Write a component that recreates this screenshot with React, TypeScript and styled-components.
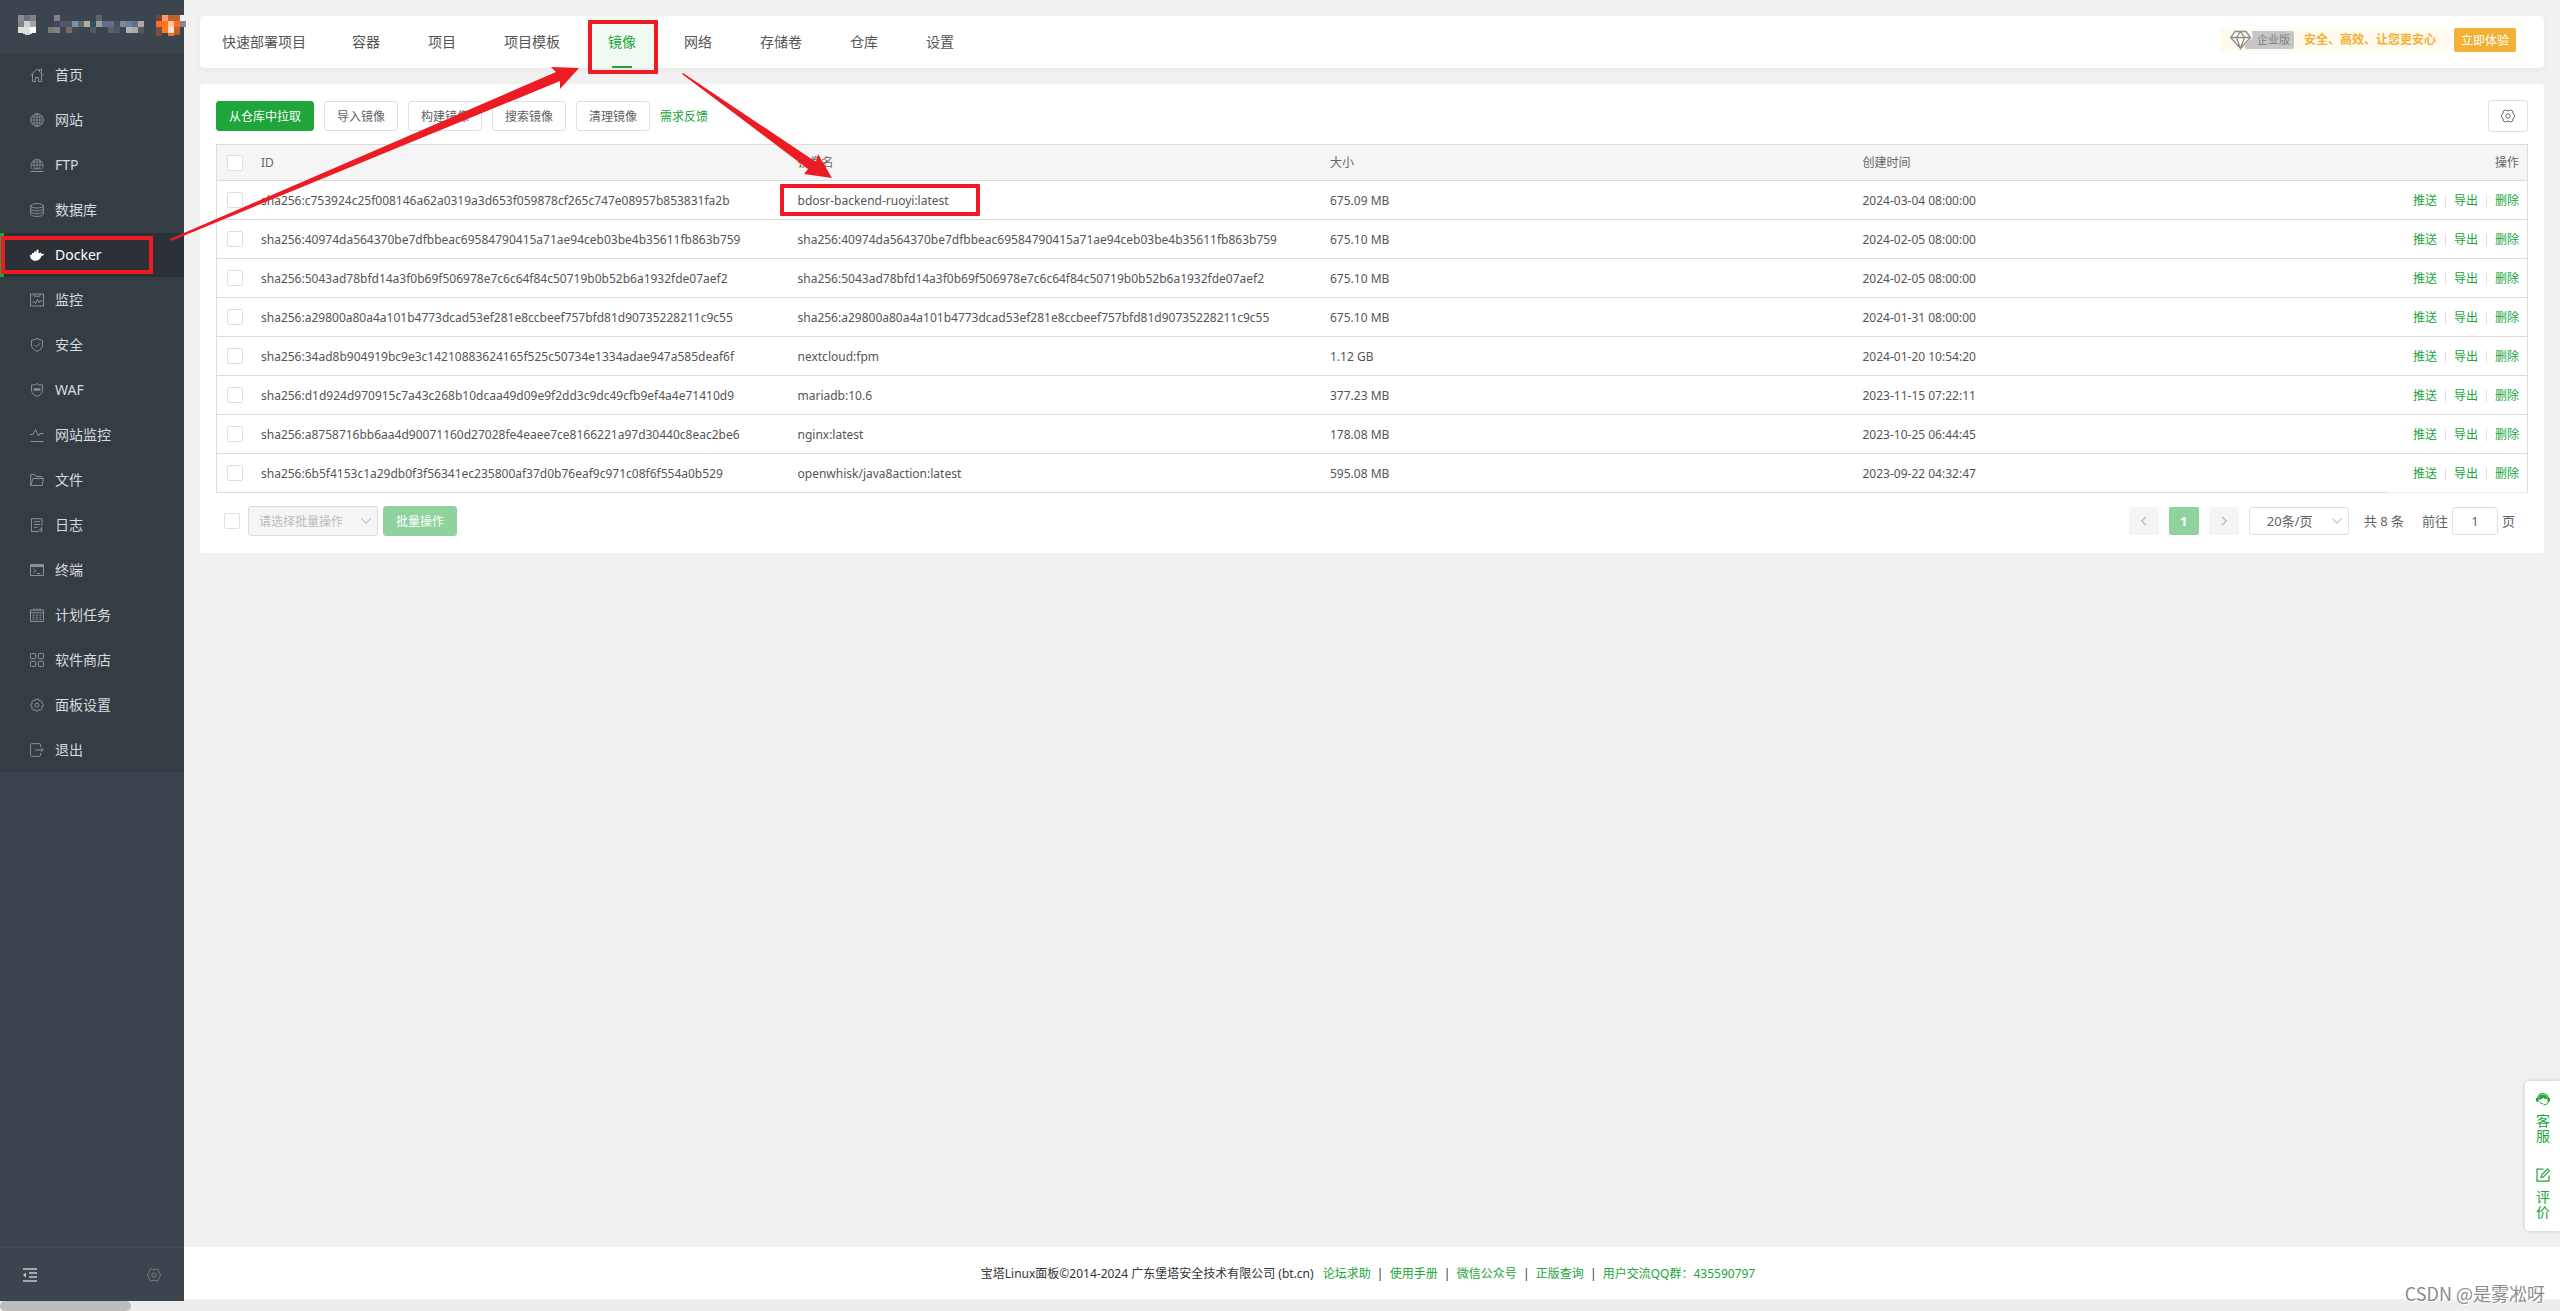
import React from "react";
import styled, { createGlobalStyle, css } from "styled-components";

const green = "#20a53a";
const line = "#dcdcdc";
const control = "#dcdfe6";

const GlobalStyle = createGlobalStyle`
  *, *::before, *::after { box-sizing: border-box; }
  body {
    margin: 0;
    background: #f1f1f1;
    color: #555;
    font: 12px/18px "Noto Sans", "Noto Sans CJK SC", sans-serif;
  }
  a { color: inherit; text-decoration: none; }
  button, input, select { font: inherit; color: inherit; margin: 0; }
  svg { display: block; flex: none; }
`;

/* ---------- shell ---------- */

const Shell = styled.div`
  position: relative;
  min-height: 100vh;
  display: flex;
  flex-direction: column;
  overflow: hidden;
`;

const Columns = styled.div`
  flex: 1;
  display: flex;
`;

const ScrollTrack = styled.div`
  height: 10px;
  background: #ededed;
`;

const ScrollThumb = styled.div`
  width: 131px;
  height: 10px;
  border-radius: 5px;
  background: #bcbcbc;
`;

/* ---------- sidebar ---------- */

const Sidebar = styled.aside`
  width: 184px;
  flex: none;
  display: flex;
  flex-direction: column;
  background: #3c444d;
`;

const Brand = styled.div`
  height: 53px;
  padding: 15px 0 0 18px;
`;

const Menu = styled.nav`
  display: flex;
  flex-direction: column;
  gap: 1px;
  background: #353d44;
`;

const MenuLink = styled.a<{ $active?: boolean }>`
  height: 44px;
  display: flex;
  align-items: center;
  gap: 11px;
  padding-left: 26px;
  border-left: 4px solid transparent;
  color: #d9dadb;
  font-size: 14px;
  line-height: 20px;
  svg { color: #8d9092; }
  ${(p) =>
    p.$active &&
    css`
      background: #2c3138;
      border-left-color: ${green};
      color: #fff;
      svg { color: #fff; }
    `}
`;

const SidebarTools = styled.div`
  height: 54px;
  margin-top: auto;
  padding: 0 23px;
  display: flex;
  justify-content: space-between;
  align-items: center;
  border-top: 1px solid #3f4f57;
`;

const ToolButton = styled.button<{ $dim?: boolean }>`
  padding: 0;
  border: 0;
  background: none;
  color: ${(p) => (p.$dim ? "#7b8084" : "#c6c8ca")};
`;

/* ---------- main ---------- */

const Main = styled.main`
  flex: 1;
  min-width: 0;
  display: flex;
  flex-direction: column;
`;

const Content = styled.div`
  flex: 1;
  display: flex;
  flex-direction: column;
  gap: 16px;
  padding: 16px;
`;

const Panel = styled.section`
  background: #fff;
  border-radius: 4px;
`;

const TopBar = styled(Panel)`
  height: 52px;
  display: flex;
  justify-content: space-between;
  padding-right: 28px;
  box-shadow: 0 2px 6px rgba(0, 0, 0, 0.04);
`;

const Tabs = styled.nav`
  display: flex;
  gap: 4px;
`;

const Tab = styled.a<{ $active?: boolean }>`
  display: flex;
  align-items: center;
  justify-content: center;
  position: relative;
  padding: 0 22px;
  font-size: 14px;
  line-height: 20px;
  &:first-child { padding-right: 20px; }
  ${(p) =>
    p.$active &&
    css`
      background: #f0f9f2;
      color: ${green};
      &::after {
        content: "";
        position: absolute;
        bottom: 0;
        width: 20px;
        height: 2px;
        background: ${green};
      }
    `}
`;

const Promo = styled.div`
  display: flex;
  align-items: center;
  height: 24px;
  margin-top: 12px;
`;

const PromoStrip = styled.div`
  display: flex;
  align-items: center;
  height: 22px;
  padding: 0 10px;
  background: #fff9ee;
  border-radius: 2px;
  color: #f3b133;
  font-weight: 700;
`;

const Edition = styled.span`
  height: 18px;
  margin: 0 10px 0 -7px;
  padding: 0 4px 0 12px;
  border-radius: 2px;
  background: #c6c6c6;
  clip-path: polygon(7px 0, 100% 0, 100% 100%, 0 100%, 0 14px, 8px 6px);
  color: #808080;
  font-size: 11px;
  font-weight: 400;
`;

const PromoTip = styled.span`
  width: 8px;
  height: 12px;
  background: #fff9ee;
  clip-path: polygon(0 0, 7px 50%, 0 100%);
`;

const PromoButton = styled.button`
  height: 24px;
  padding: 2px 7px 0;
  border: 0;
  border-radius: 2px;
  background: #f3b133;
  color: #fff;
  line-height: 18px;
`;

const Card = styled(Panel)`
  padding: 16px;
`;

const Toolbar = styled.div`
  height: 32px;
  display: flex;
  align-items: center;
  gap: 10px;
`;

const Button = styled.button<{ $kind?: "primary" | "muted" }>`
  height: 30px;
  padding: 2px 12px 0;
  border: 1px solid ${control};
  border-radius: 3px;
  background: #fff;
  color: #606266;
  line-height: 18px;
  ${(p) => p.$kind === "primary" && css`background: ${green}; border-color: ${green}; color: #fff;`}
  ${(p) => p.$kind === "muted" && css`background: #90d29d; border-color: #90d29d; color: #fff;`}
`;

const GreenLink = styled.a`
  padding-top: 2px;
  color: ${green};
`;

const SettingsButton = styled.button`
  width: 40px;
  height: 32px;
  margin-left: auto;
  padding: 0;
  display: flex;
  align-items: center;
  justify-content: center;
  border: 1px solid ${control};
  border-radius: 3px;
  background: #fff;
  color: #606266;
`;

const CheckBox = styled.input.attrs({ type: "checkbox" })`
  appearance: none;
  display: block;
  width: 16px;
  height: 16px;
  border: 1px solid ${control};
  border-radius: 2px;
  background: #fff;
  &:checked { background: ${green}; border-color: ${green}; }
`;

const Table = styled.table`
  width: 100%;
  margin-top: 12px;
  table-layout: fixed;
  border-collapse: separate;
  border-spacing: 0;
  border: 1px solid ${line};
  border-bottom: 0;
`;

const Th = styled.th<{ $width?: number; $pad?: number; $right?: boolean }>`
  height: 36px;
  width: ${(p) => (p.$width ? `${p.$width}px` : "auto")};
  padding: 0 8px 0 ${(p) => p.$pad ?? 8}px;
  border-bottom: 1px solid ${line};
  background: #f5f5f5;
  color: #666;
  font-weight: 400;
  text-align: ${(p) => (p.$right ? "right" : "left")};
`;

const Td = styled.td<{ $pad?: number; $check?: boolean }>`
  height: 39px;
  padding: ${(p) => (p.$check ? 0 : 2)}px 8px 0 ${(p) => p.$pad ?? 8}px;
  border-bottom: 1px solid ${line};
  white-space: nowrap;
  tr:last-child > &:last-child { border-bottom-color: #ebeef5; }
`;

const Actions = styled.div`
  display: flex;
  justify-content: flex-end;
  align-items: center;
  color: ${green};
  a + a {
    margin-left: 8px;
    padding-left: 9px;
    background: linear-gradient(${control}, ${control}) 0 3px / 1px 12px no-repeat;
  }
`;

const CardFooter = styled.div`
  display: flex;
  align-items: center;
  justify-content: space-between;
  height: 32px;
  margin-top: 12px;
`;

const Batch = styled.div`
  display: flex;
  align-items: center;
  gap: 5px;
  padding-left: 8px;
`;

const SelectBox = styled.span<{ $muted?: boolean }>`
  position: relative;
  display: inline-flex;
  align-items: center;
  color: ${(p) => (p.$muted ? "#bcbcbc" : "#606266")};
  margin-left: ${(p) => (p.$muted ? "3px" : "0")};
  select {
    appearance: none;
    width: ${(p) => (p.$muted ? 130 : 100)}px;
    height: ${(p) => (p.$muted ? 30 : 28)}px;
    padding: ${(p) => (p.$muted ? "2px 24px 0 10px" : "0 24px 0 17px")};
    border: 1px solid ${(p) => (p.$muted ? line : control)};
    border-radius: 3px;
    background: ${(p) => (p.$muted ? "#f5f5f5" : "#fff")};
    color: inherit;
    opacity: 1;
  }
  svg {
    position: absolute;
    right: 6px;
    color: #c0c4cc;
    pointer-events: none;
  }
`;

const Pager = styled.div`
  display: flex;
  align-items: center;
  gap: 10px;
  padding-right: 13px;
  color: #606266;
  font-size: 13px;
`;

const PageButton = styled.button<{ $current?: boolean }>`
  width: 30px;
  height: 28px;
  padding: 0;
  display: flex;
  align-items: center;
  justify-content: center;
  border: 0;
  border-radius: 2px;
  background: ${(p) => (p.$current ? "#90d29d" : "#f4f4f5")};
  color: ${(p) => (p.$current ? "#fff" : "#c0c4cc")};
  font-weight: 700;
`;

const Total = styled.span`
  padding: 0 8px 0 5px;
`;

const Jump = styled.label`
  display: flex;
  align-items: center;
  gap: 4px;
  input {
    width: 46px;
    height: 28px;
    padding: 0;
    border: 1px solid ${control};
    border-radius: 3px;
    background: #fff;
    text-align: center;
  }
`;

const Footer = styled.footer`
  height: 52px;
  margin-bottom: 2px;
  padding: 2px 8px 0 0;
  display: flex;
  align-items: center;
  justify-content: center;
  background: #fff;
  color: #333;
`;

const FooterLinks = styled.span`
  display: flex;
  margin-left: 9px;
  color: ${green};
  a + a::before {
    content: "|";
    display: inline-block;
    width: 19px;
    text-align: center;
    color: #333;
  }
`;

/* ---------- floating layers ---------- */

const Dock = styled.div`
  position: absolute;
  right: 0;
  bottom: 80px;
  width: 35px;
  height: 150px;
  padding: 11px 0 0 11px;
  border-radius: 4px 0 0 4px;
  background: #fff;
  box-shadow: 0 0 4px rgba(0, 0, 0, 0.18);
`;

const DockLink = styled.a`
  display: flex;
  flex-direction: column;
  gap: 7px;
  width: 14px;
  height: 76px;
  color: ${green};
  font-size: 14px;
  line-height: 15px;
`;

const Watermark = styled.div`
  position: absolute;
  right: 15px;
  bottom: 6px;
  color: #8c8c8c;
  font: 18px/24px "Noto Sans CJK SC", sans-serif;
  text-shadow: 1px 1px 0 #fff;
`;

const Mark = styled.div<{ $x: number; $y: number; $w: number; $h: number }>`
  position: absolute;
  left: ${(p) => p.$x}px;
  top: ${(p) => p.$y}px;
  width: ${(p) => p.$w}px;
  height: ${(p) => p.$h}px;
  border: 4px solid #ed1c24;
  border-radius: 1px;
  pointer-events: none;
`;

const Arrows = styled.svg`
  position: absolute;
  left: 0;
  top: 0;
  pointer-events: none;
`;

/* ---------- icons ---------- */

const Icon = ({ children, size = 14 }: { children: React.ReactNode; size?: number }) => (
  <svg width={size} height={size} viewBox="0 0 14 14" fill="none" stroke="currentColor" strokeWidth="1" aria-hidden="true">
    {children}
  </svg>
);

const hexGear = (
  <>
    <path d="M4.400.9 5.800 1.700h2.400L9.600.9l2.100 1.200v1.600l1.200 2 .7 1.300-.7 1.300-1.200 2v1.600l-2.100 1.200-1.400-.8H5.800l-1.400.8-2.100-1.200v-1.600l-1.200-2L.4 7l.7-1.300 1.200-2V2.100z" />
    <circle cx="7" cy="7" r="2.200" />
  </>
);

const icons: Record<string, React.ReactNode> = {
  home: <path d="M.5 7.300 7 1l6.500 6.300M2.500 6v7.500h3V9.500h3v4h3V6M9.500 3V1.200h2V4.500" />,
  globe: (
    <g strokeWidth=".8">
      <circle cx="7" cy="7" r="6.300" strokeWidth="1" />
      <ellipse cx="7" cy="7" rx="3" ry="6.300" />
      <path d="M7 .5v13M.7 7h12.600M1.500 4h11M1.500 10h11" />
    </g>
  ),
  ftp: (
    <g strokeWidth=".8">
      <path d="M2.300 11.300A6 6 0 1 1 11.700 11.300M7 1v10.300M1 7h12M2 4h10M3 11.300c1.500-1 6.500-1 8 0M4.800 10.600C3.400 8 3.400 4 5 1.400M9.200 10.600c1.400-2.600 1.400-6.600-.2-9.200" />
      <path d="M.5 13.500h13" strokeWidth="1" />
    </g>
  ),
  database: (
    <>
      <ellipse cx="7" cy="2.800" rx="6.300" ry="2.200" />
      <path d="M.7 2.800v8.400c0 1.200 2.800 2.200 6.300 2.200s6.300-1 6.300-2.200V2.800M.7 5.600c0 1.200 2.800 2.200 6.300 2.200s6.300-1 6.300-2.200M.7 8.400c0 1.200 2.800 2.200 6.300 2.200s6.300-1 6.300-2.200" />
    </>
  ),
  docker: (
    <path
      d="M0 6.800h2V5h2V3.600h2.500V1.800h2V5h1.300v1.600c.5-.8.4-1.700 0-2.300.9.200 1.400.9 1.600 1.600.9-.3 1.800-.2 2.600.3-.5 1-1.500 1.500-2.500 1.500C10.500 11 8.500 12.800 5.300 12.800 2 12.800 0 10.500 0 6.800z"
      fill="currentColor"
      stroke="none"
    />
  ),
  monitor: <path d="M.5 1h13v12H.5zM4 1v2.200h6V1M2.500 9.500l1.500-1 1.500 2 2-4 1.500 3 1-1.500h2" />,
  shield: <path d="M7 .6 12.500 2.500v4.700c0 3-2.500 5-5.500 6.200C4 12.200 1.500 10.200 1.500 7.200V2.500zM4.500 6.800l2 2 3.500-3.500" />,
  waf: (
    <>
      <path d="M7 .6 8.800 1.800 12.500 2v5.200c0 3-2.500 5-5.500 6.200C4 12.200 1.500 10.200 1.500 7.200V2l3.700-.2z" />
      <path d="M3.500 6.500h7" strokeWidth="2.500" />
    </>
  ),
  pulse: <path d="M0 6.500h3l2.500-5 3 6.500 1.500-2.500h3.500M.5 13.500h13" />,
  folder: <path d="M.7 12.500V1.500h4l1.300 2h6v2M.7 12.500 3 5.500h10.500l-1.300 7z" />,
  log: (
    <>
      <path d="M9 13.500H1.500V.7h10.500V8M4 3.700h6M4 6.500h6M4 9.300h3.500M11.500 9v3" />
      <circle cx="10.800" cy="12.200" r="1.200" />
    </>
  ),
  terminal: (
    <>
      <path d="M.5 1.500h13v11H.5zM3.500 6l2.200 2-2.200 2M7 10.500h3.500" />
      <path d="M.5 2.800h13" strokeWidth="2.500" />
    </>
  ),
  calendar: (
    <path d="M.5 2h13v11.500H.5zM.5 4.800h13M4 .3V3M10 .3V3M7 .3V3M2.500 7.200h2M6 7.200h2M9.500 7.200h2M2.500 9.300h2M6 9.300h2M9.500 9.300h2M2.500 11.400h2M6 11.400h2M9.500 11.400h2" />
  ),
  grid: (
    <>
      <rect x=".5" y=".5" width="5.200" height="5.200" rx=".8" />
      <rect x="8.300" y=".5" width="5.200" height="5.200" rx=".8" />
      <rect x=".5" y="8.300" width="5.200" height="5.200" rx=".8" />
      <rect x="8.300" y="8.300" width="5.200" height="5.200" rx=".8" />
    </>
  ),
  gear: (
    <>
      <path d="M5.500 1.200h3l.5 1.500 1.600-.5 1.700 2L11.600 5.500l1.600.7v2l-1.600.7.700 1.500-1.700 1.800L9 11.500l-.5 1.400h-3L5 11.500l-1.600.7-1.700-1.800.7-1.500L.8 8.200v-2l1.600-.7L1.700 4.200l1.700-2L5 2.700z" />
      <circle cx="7" cy="7.100" r="2" />
    </>
  ),
  exit: <path d="M10.500 4V1.500l-1-.9H1.500L.6 1.500v11l.9.9h8l1-.9V10M5 7h8M11 4.800 13.300 7 11 9.200" />,
};

const Chevron = ({ dir, heavy }: { dir: "down" | "left" | "right"; heavy?: boolean }) => (
  <Icon size={12}>
    <path
      d={{ down: "M1.500 4 7 9.500 12.500 4", left: "M9.500 2 4.500 7l5 5", right: "M4.500 2l5 5-5 5" }[dir]}
      strokeWidth={heavy ? 2 : 1.4}
    />
  </Icon>
);

/* Pixelated server name and message badge in the sidebar header. */
const cells: [number, number, string][] = [
  [0, 0, "#8a8c91"], [1, 0, "#6a7079"], [2, 0, "#7d8188"],
  [0, 1, "#80838a"], [1, 1, "#d3d3d4"], [2, 1, "#a3a4a8"],
  [0, 2, "#e0e0e0"], [1, 2, "#dedede"], [2, 2, "#ffffff"],
  [6, 0, "#7d828a"], [13, 0, "#5a6170"],
  [6, 1, "#4c4560"], [7, 1, "#4f5a70"], [8, 1, "#50555a"], [9, 1, "#7393a8"], [10, 1, "#66676a"],
  [11, 1, "#b5b0a2"], [12, 1, "#2f5060"], [13, 1, "#a39a9e"], [14, 1, "#5f6e8e"], [15, 1, "#6c6a85"],
  [16, 1, "#45535f"], [17, 1, "#7d8b90"], [18, 1, "#6b7fa3"], [19, 1, "#656d88"], [20, 1, "#a9a6ad"],
  [5, 2, "#7d7870"], [6, 2, "#7d828a"], [8, 2, "#756a68"], [9, 2, "#49464f"], [12, 2, "#4b5a68"],
  [15, 2, "#5f6169"], [16, 2, "#4b5670"], [18, 2, "#b3b3b6"], [19, 2, "#a8a8a8"], [20, 2, "#55585d"],
  [23, 0, "#70493c"], [24, 0, "#ff9a66"], [25, 0, "#c0622f"], [26, 0, "#c0622f"],
  [23, 1, "#ff6a24"], [24, 1, "#ff7428"], [25, 1, "#ffc896"], [26, 1, "#ff6a24"],
  [23, 2, "#7a5040"], [24, 2, "#ff7a30"], [25, 2, "#ffe0c8"], [26, 2, "#c45f2c"],
];

const BrandMosaic = () => (
  <svg width="168" height="22" viewBox="0 0 168 22" shapeRendering="crispEdges" role="img" aria-label="服务器名称">
    {cells.map(([c, r, fill]) => (
      <rect key={`${c}-${r}`} x={c * 6} y={r * 6} width="6" height="6" fill={fill} />
    ))}
    <path d="M5 18h9v1h-2v1H7v-1H5z" fill="#d5d6d8" />
    <path d="M138 18h6v3h-6z" fill="#7a5040" />
    <path d="M150 18h6v3h-6z" fill="#ff6a20" />
    <path d="M156 18h6v2h-6z" fill="#b55a2c" />
    <path d="M162 0h4v6h-4z" fill="#f1f1f1" />
    <path d="M162 6h6v6h-6z" fill="#808890" />
  </svg>
);

/* ---------- data ---------- */

const menu: [string, string][] = [
  ["home", "首页"], ["globe", "网站"], ["ftp", "FTP"], ["database", "数据库"],
  ["docker", "Docker"], ["monitor", "监控"], ["shield", "安全"], ["waf", "WAF"],
  ["pulse", "网站监控"], ["folder", "文件"], ["log", "日志"], ["terminal", "终端"],
  ["calendar", "计划任务"], ["grid", "软件商店"], ["gear", "面板设置"], ["exit", "退出"],
];

const tabs = ["快速部署项目", "容器", "项目", "项目模板", "镜像", "网络", "存储卷", "仓库", "设置"];

const images: [string, string, string, string][] = [
  ["sha256:c753924c25f008146a62a0319a3d653f059878cf265c747e08957b853831fa2b", "bdosr-backend-ruoyi:latest", "675.09 MB", "2024-03-04 08:00:00"],
  ["sha256:40974da564370be7dfbbeac69584790415a71ae94ceb03be4b35611fb863b759", "sha256:40974da564370be7dfbbeac69584790415a71ae94ceb03be4b35611fb863b759", "675.10 MB", "2024-02-05 08:00:00"],
  ["sha256:5043ad78bfd14a3f0b69f506978e7c6c64f84c50719b0b52b6a1932fde07aef2", "sha256:5043ad78bfd14a3f0b69f506978e7c6c64f84c50719b0b52b6a1932fde07aef2", "675.10 MB", "2024-02-05 08:00:00"],
  ["sha256:a29800a80a4a101b4773dcad53ef281e8ccbeef757bfd81d90735228211c9c55", "sha256:a29800a80a4a101b4773dcad53ef281e8ccbeef757bfd81d90735228211c9c55", "675.10 MB", "2024-01-31 08:00:00"],
  ["sha256:34ad8b904919bc9e3c14210883624165f525c50734e1334adae947a585deaf6f", "nextcloud:fpm", "1.12 GB", "2024-01-20 10:54:20"],
  ["sha256:d1d924d970915c7a43c268b10dcaa49d09e9f2dd3c9dc49cfb9ef4a4e71410d9", "mariadb:10.6", "377.23 MB", "2023-11-15 07:22:11"],
  ["sha256:a8758716bb6aa4d90071160d27028fe4eaee7ce8166221a97d30440c8eac2be6", "nginx:latest", "178.08 MB", "2023-10-25 06:44:45"],
  ["sha256:6b5f4153c1a29db0f3f56341ec235800af37d0b76eaf9c971c08f6f554a0b529", "openwhisk/java8action:latest", "595.08 MB", "2023-09-22 04:32:47"],
];

const footerLinks = ["论坛求助", "使用手册", "微信公众号", "正版查询", "用户交流QQ群：435590797"];

export default function App() {
  return (
    <Shell>
      <GlobalStyle />
      <Columns>
        <Sidebar>
          <Brand>
            <BrandMosaic />
          </Brand>
          <Menu>
            {menu.map(([icon, label]) => (
              <MenuLink key={label} href="#" $active={icon === "docker"}>
                <Icon>{icons[icon]}</Icon>
                {label}
              </MenuLink>
            ))}
          </Menu>
          <SidebarTools>
            <ToolButton aria-label="收起菜单">
              <Icon>
                <path d="M0 1h14M6 5h8M6 9h8M0 13h14" strokeWidth="1.400" />
                <path d="M0 7l3-2.500v5z" fill="currentColor" stroke="none" />
              </Icon>
            </ToolButton>
            <ToolButton $dim aria-label="菜单设置">
              <Icon>{hexGear}</Icon>
            </ToolButton>
          </SidebarTools>
        </Sidebar>

        <Main>
          <Content>
            <TopBar>
              <Tabs>
                {tabs.map((t) => (
                  <Tab key={t} href="#" $active={t === "镜像"}>
                    {t}
                  </Tab>
                ))}
              </Tabs>
              <Promo>
                <PromoStrip>
                  <svg width="22" height="20" viewBox="0 0 22 20" fill="none" stroke="#8f8f8f" strokeWidth="1.300" aria-hidden="true">
                    <path d="M5 1.500h11l4.500 6L10.500 18.500.7 7.500zM.7 7.500h19.800M10.500 18.500 6.500 7.500l4-6 4 6z" />
                  </svg>
                  <Edition>企业版</Edition>
                  安全、高效、让您更安心
                </PromoStrip>
                <PromoTip />
                <PromoButton>立即体验</PromoButton>
              </Promo>
            </TopBar>

            <Card>
              <Toolbar>
                <Button $kind="primary">从仓库中拉取</Button>
                <Button>导入镜像</Button>
                <Button>构建镜像</Button>
                <Button>搜索镜像</Button>
                <Button>清理镜像</Button>
                <GreenLink href="#">需求反馈</GreenLink>
                <SettingsButton aria-label="列设置">
                  <Icon>{hexGear}</Icon>
                </SettingsButton>
              </Toolbar>

              <Table>
                <thead>
                  <tr>
                    <Th $width={40} $pad={10}>
                      <CheckBox aria-label="全选" />
                    </Th>
                    <Th $pad={4}>ID</Th>
                    <Th>镜像名</Th>
                    <Th>大小</Th>
                    <Th>创建时间</Th>
                    <Th $width={140} $right>
                      操作
                    </Th>
                  </tr>
                </thead>
                <tbody>
                  {images.map(([id, name, size, created]) => (
                    <tr key={id}>
                      <Td $check $pad={10}>
                        <CheckBox aria-label={`选择 ${name}`} />
                      </Td>
                      <Td $pad={4}>{id}</Td>
                      <Td>{name}</Td>
                      <Td>{size}</Td>
                      <Td>{created}</Td>
                      <Td>
                        <Actions>
                          <a href="#">推送</a>
                          <a href="#">导出</a>
                          <a href="#">删除</a>
                        </Actions>
                      </Td>
                    </tr>
                  ))}
                </tbody>
              </Table>

              <CardFooter>
                <Batch>
                  <CheckBox aria-label="全选当前页" />
                  <SelectBox $muted>
                    <select disabled aria-label="批量操作类型">
                      <option>请选择批量操作</option>
                    </select>
                    <Chevron dir="down" />
                  </SelectBox>
                  <Button $kind="muted">批量操作</Button>
                </Batch>
                <Pager>
                  <PageButton aria-label="上一页">
                    <Chevron dir="left" heavy />
                  </PageButton>
                  <PageButton $current>1</PageButton>
                  <PageButton aria-label="下一页">
                    <Chevron dir="right" heavy />
                  </PageButton>
                  <SelectBox>
                    <select aria-label="每页条数">
                      <option>20条/页</option>
                    </select>
                    <Chevron dir="down" />
                  </SelectBox>
                  <Total>共 8 条</Total>
                  <Jump>
                    前往
                    <input type="text" defaultValue="1" />
                    页
                  </Jump>
                </Pager>
              </CardFooter>
            </Card>
          </Content>

          <Footer>
            宝塔Linux面板©2014-2024 广东堡塔安全技术有限公司 (bt.cn)
            <FooterLinks>
              {footerLinks.map((l) => (
                <a key={l} href="#">
                  {l}
                </a>
              ))}
            </FooterLinks>
          </Footer>
        </Main>
      </Columns>
      <ScrollTrack>
        <ScrollThumb />
      </ScrollTrack>

      <Dock>
        <DockLink href="#">
          <Icon>
            <path d="M1.500 7a5.500 5.500 0 0 1 11 0" strokeWidth="1.200" />
            <path d="M0 6h2.500v4H1.500L0 9zM14 6h-2.500v4h1L14 9zM2.500 7.500C2.500 4 4.500 2.500 7 2.500s4.500 1.500 4.500 4.500C9 7 8 6.500 7.500 5.500 6 7 4.500 7.500 2.500 7.500z" fill="currentColor" stroke="none" />
            <path d="M3.500 9.500c.8 1.700 2 2.300 3.500 2.300M12.500 10c-.8 2-2.500 2.800-5 2.800" />
          </Icon>
          客服
        </DockLink>
        <DockLink href="#">
          <Icon>
            <path d="M7.500 1.200H1v12h12V7.500M5 9.500l.6-2.500L11.500.9l1.800 1.800L7.400 8.900z" strokeWidth="1.200" />
          </Icon>
          评价
        </DockLink>
      </Dock>

      <Mark $x={1} $y={236} $w={152} $h={38} />
      <Mark $x={588} $y={20} $w={70} $h={54} />
      <Mark $x={780} $y={184} $w={200} $h={32} />
      <Arrows width="860" height="260" viewBox="0 0 860 260" fill="#ed1c24" aria-hidden="true">
        <path d="M170 239 556 72 551 67 579 68 560 89 560 81 171 241z" />
        <path d="M682 74 683 73 816 162 818 154 832 178 804 174 808 169z" />
      </Arrows>
      <Watermark>CSDN @是雾凇呀</Watermark>
    </Shell>
  );
}
